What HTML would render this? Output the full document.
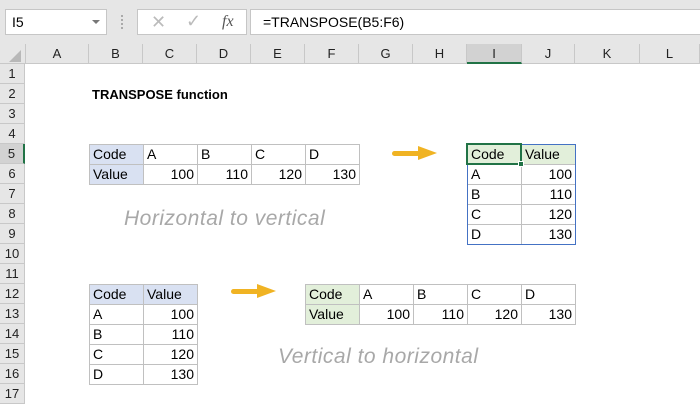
<!DOCTYPE html>
<html><head><meta charset="utf-8"><style>
*{margin:0;padding:0;box-sizing:border-box}
body{width:700px;height:400px;overflow:hidden;background:#fff;font-family:"Liberation Sans",Calibri,sans-serif;position:relative;font-size:14px;color:#000}
.a{position:absolute}
.top{left:0;top:0;width:700px;height:44px;background:#e6e6e6}
.box{background:#fff;border:1px solid #c6c6c6}
.ch{top:44px;height:20px;background:#e6e6e6;border-right:1px solid #c8c8c8;border-bottom:1px solid #c8c8c8;text-align:center;line-height:19px;font-size:13px;color:#222}
.rh{left:0;width:25px;height:20px;background:#e6e6e6;border-bottom:1px solid #c8c8c8;border-right:1px solid #c8c8c8;text-align:center;line-height:20px;font-size:13px;color:#222}
.c{height:21px;border:1px solid #c0c0c0;line-height:19px;padding:0 3px;font-size:14px}
.r{text-align:right}
.bl{background:#d9e1f2}.gr{background:#e2efda}
.it{font-family:"Liberation Sans",sans-serif;font-style:italic;color:#a8a8a8;font-size:21px;letter-spacing:0.5px}
</style></head><body>
<div class="a top"></div>
<div class="a box" style="left:5px;top:9px;width:102px;height:26px;font-size:14px;line-height:24px;padding-left:6px">I5</div>
<div class="a" style="left:92px;top:20px;border-left:4px solid transparent;border-right:4px solid transparent;border-top:4px solid #777"></div>
<div class="a" style="left:121px;top:15px;width:3px;height:14px;border-left:2px dotted #aaa"></div>
<div class="a box" style="left:137px;top:9px;width:110px;height:26px"></div>
<div class="a" style="left:151px;top:12px;font-size:18px;color:#bbb">✕</div>
<div class="a" style="left:186px;top:11px;font-size:18px;color:#bbb">✓</div>
<div class="a" style="left:222px;top:13px;font-size:16px;font-style:italic;font-family:'Liberation Serif',serif;color:#555">fx</div>
<div class="a box" style="left:250px;top:9px;width:460px;height:26px;line-height:24px;padding-left:12px;font-size:14px">=TRANSPOSE(B5:F6)</div>

<div class="a" style="left:0;top:44px;width:26px;height:20px;background:#e6e6e6;border-right:1px solid #c8c8c8;border-bottom:1px solid #c8c8c8"></div>
<div class="a" style="left:9px;top:50px;border-left:12px solid transparent;border-bottom:12px solid #b8b8b8"></div>
<div class="a ch" style="left:26px;width:63px">A</div>
<div class="a ch" style="left:89px;width:54px">B</div>
<div class="a ch" style="left:143px;width:54px">C</div>
<div class="a ch" style="left:197px;width:54px">D</div>
<div class="a ch" style="left:251px;width:54px">E</div>
<div class="a ch" style="left:305px;width:54px">F</div>
<div class="a ch" style="left:359px;width:54px">G</div>
<div class="a ch" style="left:413px;width:54px">H</div>
<div class="a ch" style="left:467px;width:55px;background:#d2d2d2;border-bottom:2px solid #217346">I</div>
<div class="a ch" style="left:522px;width:53px">J</div>
<div class="a ch" style="left:575px;width:65px">K</div>
<div class="a ch" style="left:640px;width:60px">L</div>

<div class="a rh" style="top:64px">1</div>
<div class="a rh" style="top:84px">2</div>
<div class="a rh" style="top:104px">3</div>
<div class="a rh" style="top:124px">4</div>
<div class="a rh" style="top:144px;background:#d2d2d2;border-right:2px solid #217346">5</div>
<div class="a rh" style="top:164px">6</div>
<div class="a rh" style="top:184px">7</div>
<div class="a rh" style="top:204px">8</div>
<div class="a rh" style="top:224px">9</div>
<div class="a rh" style="top:244px">10</div>
<div class="a rh" style="top:264px">11</div>
<div class="a rh" style="top:284px">12</div>
<div class="a rh" style="top:304px">13</div>
<div class="a rh" style="top:324px">14</div>
<div class="a rh" style="top:344px">15</div>
<div class="a rh" style="top:364px">16</div>
<div class="a rh" style="top:384px">17</div>

<div class="a" style="left:92px;top:87px;font-weight:bold;font-size:13px">TRANSPOSE function</div>

<div class="a c bl" style="left:89px;top:144px;width:55px">Code</div>
<div class="a c" style="left:143px;top:144px;width:55px">A</div>
<div class="a c" style="left:197px;top:144px;width:55px">B</div>
<div class="a c" style="left:251px;top:144px;width:55px">C</div>
<div class="a c" style="left:305px;top:144px;width:55px">D</div>
<div class="a c bl" style="left:89px;top:164px;width:55px">Value</div>
<div class="a c r" style="left:143px;top:164px;width:55px">100</div>
<div class="a c r" style="left:197px;top:164px;width:55px">110</div>
<div class="a c r" style="left:251px;top:164px;width:55px">120</div>
<div class="a c r" style="left:305px;top:164px;width:55px">130</div>
<div class="a it" style="left:124px;top:207px">Horizontal to vertical</div>

<div class="a" style="left:392px;top:151px;width:28px;height:5px;background:#f0b323;border-radius:3px"></div>
<div class="a" style="left:418px;top:146px;border-top:7px solid transparent;border-bottom:7px solid transparent;border-left:19px solid #f0b323"></div>

<div class="a c gr" style="left:467px;top:144px;width:55px">Code</div>
<div class="a c gr" style="left:521px;top:144px;width:55px">Value</div>
<div class="a c" style="left:467px;top:164px;width:55px">A</div>
<div class="a c r" style="left:521px;top:164px;width:55px">100</div>
<div class="a c" style="left:467px;top:184px;width:55px">B</div>
<div class="a c r" style="left:521px;top:184px;width:55px">110</div>
<div class="a c" style="left:467px;top:204px;width:55px">C</div>
<div class="a c r" style="left:521px;top:204px;width:55px">120</div>
<div class="a c" style="left:467px;top:224px;width:55px">D</div>
<div class="a c r" style="left:521px;top:224px;width:55px">130</div>
<div class="a" style="left:467px;top:144px;width:109px;height:101px;border:1px solid #4472c4"></div>
<div class="a" style="left:466px;top:143px;width:56px;height:22px;border:2px solid #217346"></div>
<div class="a" style="left:518px;top:161px;width:6px;height:6px;background:#217346;border:1px solid #fff"></div>

<div class="a c bl" style="left:89px;top:284px;width:55px">Code</div>
<div class="a c bl" style="left:143px;top:284px;width:55px">Value</div>
<div class="a c" style="left:89px;top:304px;width:55px">A</div>
<div class="a c r" style="left:143px;top:304px;width:55px">100</div>
<div class="a c" style="left:89px;top:324px;width:55px">B</div>
<div class="a c r" style="left:143px;top:324px;width:55px">110</div>
<div class="a c" style="left:89px;top:344px;width:55px">C</div>
<div class="a c r" style="left:143px;top:344px;width:55px">120</div>
<div class="a c" style="left:89px;top:364px;width:55px">D</div>
<div class="a c r" style="left:143px;top:364px;width:55px">130</div>

<div class="a" style="left:231px;top:289px;width:28px;height:5px;background:#f0b323;border-radius:3px"></div>
<div class="a" style="left:257px;top:284px;border-top:7px solid transparent;border-bottom:7px solid transparent;border-left:19px solid #f0b323"></div>

<div class="a c gr" style="left:305px;top:284px;width:55px">Code</div>
<div class="a c" style="left:359px;top:284px;width:55px">A</div>
<div class="a c" style="left:413px;top:284px;width:55px">B</div>
<div class="a c" style="left:467px;top:284px;width:55px">C</div>
<div class="a c" style="left:521px;top:284px;width:55px">D</div>
<div class="a c gr" style="left:305px;top:304px;width:55px">Value</div>
<div class="a c r" style="left:359px;top:304px;width:55px">100</div>
<div class="a c r" style="left:413px;top:304px;width:55px">110</div>
<div class="a c r" style="left:467px;top:304px;width:55px">120</div>
<div class="a c r" style="left:521px;top:304px;width:55px">130</div>
<div class="a it" style="left:278px;top:345px">Vertical to horizontal</div>
</body></html>
